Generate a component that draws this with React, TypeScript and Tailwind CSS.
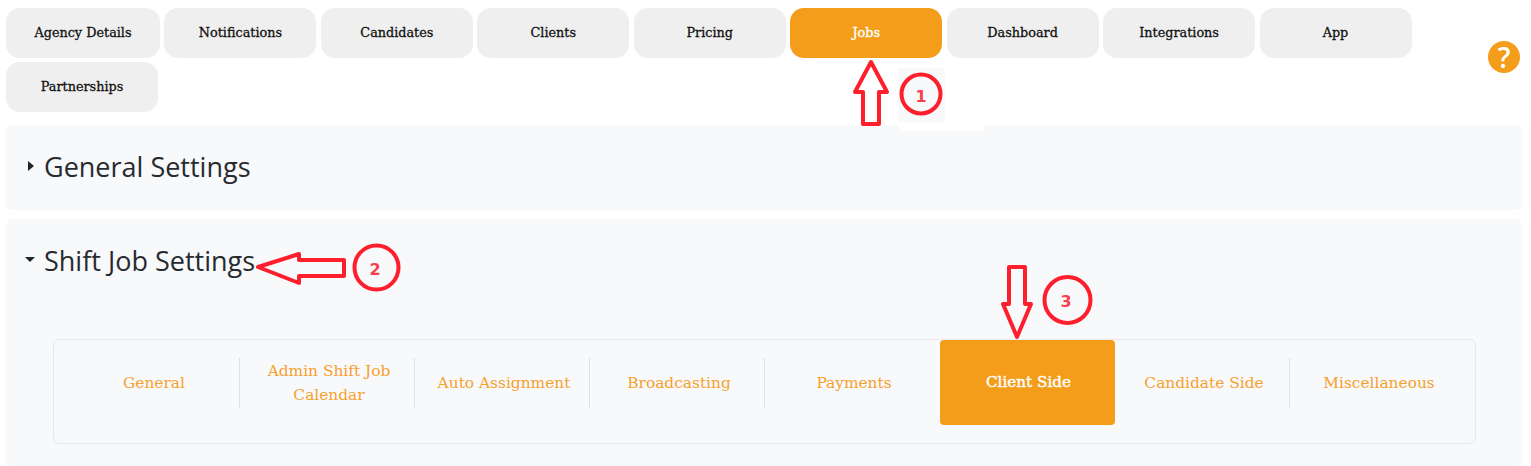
const topTabs = ["Agency Details", "Notifications", "Candidates", "Clients", "Pricing", "Jobs", "Dashboard", "Integrations", "App", "Partnerships"]
const subTabs = ["General", "Admin Shift Job Calendar", "Auto Assignment", "Broadcasting", "Payments", "Client Side", "Candidate Side", "Miscellaneous"]

function Annotations() {
  return (
    <svg className="absolute left-0 top-0 pointer-events-none" width="1531" height="466" fill="none">
      <g stroke="#fe1f2c" strokeWidth="4" strokeLinejoin="round">
        <path d="M871 62 L887 92 L879 92 L879 124 L863 124 L863 92 L855 92 Z" />
        <path d="M258 267 L299 254 L299 260 L344 260 L344 276 L299 276 L299 283 Z" />
        <path d="M1017 337 L1003 304 L1009 304 L1009 267 L1025 267 L1025 304 L1031 304 Z" />
        <circle cx="921" cy="94" r="19.5" />
        <circle cx="376.5" cy="267.5" r="22" />
        <circle cx="1067.5" cy="300" r="23" />
      </g>
      <g fill="#f8404c" fontFamily="'DejaVu Sans', sans-serif" fontWeight="700" fontSize="16" textAnchor="middle">
        <text x="921" y="102">1</text>
        <text x="375" y="275">2</text>
        <text x="1066" y="307">3</text>
      </g>
    </svg>
  )
}

export default function App() {
  return (
    <div className="relative h-[466px] w-[1531px] overflow-hidden bg-white">
      <div className="flex">
        <div className="flex w-[1480px] flex-wrap gap-x-[4.45px] gap-y-1 pl-1.5 pt-2 font-['DejaVu_Serif',serif]">
          {topTabs.map((tab) => (
            <button
              key={tab}
              className={
                tab === "Jobs"
                  ? "h-[50px] w-[152px] rounded-[14px] bg-[#f49d1a] text-[12.8px] font-medium text-white [-webkit-text-stroke:0.35px_#fff]"
                  : tab === "Agency Details"
                    ? "h-[50px] w-[154px] rounded-[14px] bg-[#efefef] text-[12.8px] font-medium text-[#111] [-webkit-text-stroke:0.3px_#111]"
                    : "h-[50px] w-[152px] rounded-[14px] bg-[#efefef] text-[12.8px] font-medium text-[#111] [-webkit-text-stroke:0.3px_#111]"
              }
            >
              {tab}
            </button>
          ))}
        </div>
        <div className="ml-2 mt-[41px] flex h-8 w-8 items-center justify-center rounded-full bg-[#f49d1a] font-['Open_Sans',sans-serif] text-[28px] font-semibold text-white">
          ?
        </div>
      </div>

      <section className="mx-1.5 mt-[13px] flex h-[85px] w-[1516px] items-center rounded-md bg-[#f8f9fb] pl-[22px]">
        <span className="mr-[10px] h-0 w-0 -translate-y-0.5 border-y-[5px] border-l-[6px] border-y-transparent border-l-[#212529]" />
        <h2 className="font-['Open_Sans',sans-serif] text-[27px] text-[#272b30]">General Settings</h2>
      </section>

      <section className="mx-1.5 mt-[9px] h-[247px] w-[1516px] rounded-md bg-[#f8f9fb] pl-[47px] pt-[22px]">
        <div className="relative -ml-[28px] flex h-10 items-center">
          <span className="mr-[9px] h-0 w-0 -translate-y-0.5 border-x-[5px] border-t-[5px] border-x-transparent border-t-[#212529]" />
          <h2 className="font-['Open_Sans',sans-serif] text-[27px] text-[#272b30]">Shift Job Settings</h2>
        </div>
        <nav className="mt-[58px] flex h-[105px] w-[1423px] items-start rounded-md border border-[#e6e8eb] pl-[11px] font-['DejaVu_Serif',serif]">
          {subTabs.map((tab, i) => (
            <div key={tab} className="relative flex h-[85px] w-[175px] items-center justify-center">
              {tab === "Client Side" ? (
                <a className="flex h-full w-full items-center justify-center rounded bg-[#f49d1a] pl-0.5 text-[15.2px] font-medium text-white [-webkit-text-stroke:0.4px_#fff]">{tab}</a>
              ) : (
                <a className="pl-[20px] pr-[17px] text-center text-[15.4px] leading-6 text-[#f7a02c]">{tab}</a>
              )}
              {i < 7 && i !== 4 && i !== 5 && <span className="absolute right-0 top-[18px] h-[50px] w-px bg-[#dfe1e4]" />}
            </div>
          ))}
        </nav>
      </section>

      {/* patches left over from the screenshot annotation */}
      <div className="absolute left-[898px] top-[68px] h-[54px] w-[47px] bg-[#f8f9fb]" />
      <div className="absolute left-[899px] top-[125px] h-1.5 w-[85px] bg-white" />
      <Annotations />
    </div>
  )
}
